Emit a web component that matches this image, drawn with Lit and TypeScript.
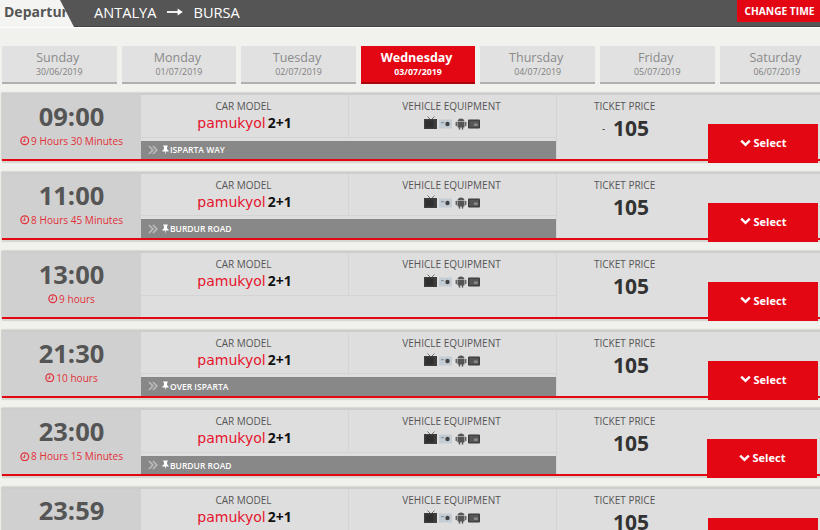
import { LitElement, html, css, svg } from "lit";
import { customElement } from "lit/decorators.js";

const days = [
  ["Sunday", "30/06/2019"], ["Monday", "01/07/2019"], ["Tuesday", "02/07/2019"],
  ["Wednesday", "03/07/2019"], ["Thursday", "04/07/2019"], ["Friday", "05/07/2019"], ["Saturday", "06/07/2019"],
];
const trips = [
  { t: "09:00", d: "9 Hours 30 Minutes", via: "ISPARTA WAY", dash: true },
  { t: "11:00", d: "8 Hours 45 Minutes", via: "BURDUR ROAD" },
  { t: "13:00", d: "9 hours", via: "" },
  { t: "21:30", d: "10 hours", via: "OVER ISPARTA" },
  { t: "23:00", d: "8 Hours 15 Minutes", via: "BURDUR ROAD", shift: true },
  { t: "23:59", d: "", via: "" },
];

const clock = svg`<svg class="clk" viewBox="0 0 12 12"><circle cx="6" cy="6" r="4.9" fill="none" stroke="currentColor" stroke-width="1.6"/><path d="M6 3V6.6H3.4" fill="none" stroke="currentColor" stroke-width="1.3"/></svg>`;
const chev = svg`<svg class="chev" viewBox="0 0 12 8"><path d="M1.3 1.4L6 6.1L10.7 1.4" fill="none" stroke="#fff" stroke-width="2.6"/></svg>`;
const dbl = svg`<svg class="dbl" viewBox="0 0 10 10"><path d="M1 1L4.8 5L1 9M5 1L8.8 5L5 9" fill="none" stroke="#b9b9b9" stroke-width="1.8"/></svg>`;
const pin = svg`<svg class="pin" viewBox="0 0 8 11"><path d="M1.4 0.3H6.6V1.4L5.8 1.9V4.6L7.6 6.3V7.3H4.5L4 10.9L3.5 7.3H0.4V6.3L2.2 4.6V1.9L1.4 1.4Z" fill="#fff"/></svg>`;
const arrow = svg`<svg class="arrow" viewBox="0 0 16 8"><path d="M0 4H13" stroke="#fff" stroke-width="1.8"/><path d="M10.6 0.4L15.8 4L10.6 7.6Z" fill="#fff"/></svg>`;
const icons = svg`<svg class="eq" viewBox="0 0 56 14">
  <path d="M3.5 0.5L6.5 3.5M10.5 0.5L7.5 3.5" stroke="#555" stroke-width="0.8" fill="none"/>
  <rect x="0" y="3" width="13" height="10" fill="#3d3d3d"/><rect x="1.5" y="4.5" width="8" height="7" fill="#2f2f2f"/>
  <rect x="15" y="3.5" width="13" height="9" fill="#c4ccd4"/><circle cx="23.5" cy="8" r="2.2" fill="#444"/><rect x="17" y="6" width="3" height="1.2" fill="#8a949e"/>
  <path d="M33.5 5.2a3.6 3.6 0 0 1 7 0Z" fill="#555"/><rect x="33.5" y="5.8" width="7" height="5.6" rx="0.6" fill="#555"/><rect x="31.6" y="5.8" width="1.3" height="4.4" rx="0.6" fill="#555"/><rect x="41.1" y="5.8" width="1.3" height="4.4" rx="0.6" fill="#555"/><rect x="34.8" y="11" width="1.4" height="2.6" fill="#555"/><rect x="37.8" y="11" width="1.4" height="2.6" fill="#555"/>
  <rect x="44" y="3.5" width="12" height="9" rx="1" fill="#3a3a3a"/><rect x="45.2" y="4.7" width="9.6" height="6.6" fill="#565656"/><rect x="50" y="7.5" width="3.6" height="2.4" fill="#8d8d8d"/>
</svg>`;

@customElement("app-root")
export class AppRoot extends LitElement {
  static styles = css`
    :host { display: block; width: 820px; height: 530px; overflow: hidden; background: #f1f1ed; font-family: "Open Sans", sans-serif; }
    .top { display: flex; align-items: flex-start; height: 27px; background: #555; border-bottom: 1px solid #fff; box-shadow: inset 0 -1px 0 #444; }
    .tab { width: 74px; height: 27px; background: #f4f4f2; clip-path: polygon(0 0, 60px 0, 74px 100%, 0 100%); font-size: 14px; font-weight: 700; color: #555; line-height: 23px; padding-left: 4px; box-sizing: border-box; overflow: hidden; white-space: nowrap; }
    .route { display: flex; align-items: center; height: 23px; margin-left: 20px; color: #fff; font-size: 14.6px; }
    .arrow { width: 16px; height: 8px; margin: 0 11px 0 10px; }
    .change { margin-left: auto; width: 83px; height: 22px; box-sizing: border-box; padding-left: 2px; background: #e30613; color: #fff; font-size: 10.2px; font-weight: 700; line-height: 22px; text-align: center; white-space: nowrap; }
    .days { display: flex; gap: 5px; padding: 18px 0 0 2px; width: 840px; }
    .day { flex: none; width: 114.6px; height: 36px; background: #e1e1e1; border-bottom: 2px solid #b0b0b0; color: #8a8a8a; text-align: center; font-size: 12.5px; line-height: 17px; }
    .day small { display: block; font-size: 8.8px; line-height: 10px; margin-top: 1px; color: #7f7f7f; }
    .day span { display: block; padding: 3px 3px 0 0; }
    .day.on { background: #e30613; border-bottom-color: #a8050f; color: #fff; font-weight: 700; }
    .day.on small { color: #fff; }
    .list { display: flex; flex-direction: column; gap: 10.8px; padding: 9.2px 0 0 2px; }
    .card { position: relative; flex: none; display: flex; height: 68px; width: 818px; box-sizing: border-box; background: #dedede; border-top: 2px solid #cdcdcd; border-bottom: 2px solid #e30613; box-shadow: -1px 0 1px #d4d4ce, 0 -1px 1px #dcdcd6, 0 2px 1px #d8d8d2; }
    .time { flex: none; width: 139px; background: #d0d0d0; text-align: center; color: #555; }
    .time b { display: block; font-size: 25.5px; line-height: 34px; margin-top: 4px; }
    .dur { display: flex; justify-content: center; align-items: center; gap: 1.5px; color: #e2303a; font-size: 10.1px; line-height: 14px; margin-top: 1px; }
    .clk { width: 9.5px; height: 9.5px; }
    .mid { flex: none; width: 415px; display: flex; flex-direction: column; }
    .cols { display: flex; height: 43px; border-bottom: 1px solid #d4d4d4; box-sizing: border-box; }
    .col { flex: 1; text-align: center; font-size: 10px; line-height: 14px; color: #555; padding: 4px 2px 0 0; }
    .col + .col { border-left: 1px solid #d4d4d4; }
    .logo { display: flex; justify-content: center; align-items: baseline; color: #e6142d; font-family: "DejaVu Sans", sans-serif; font-size: 14px; line-height: 17px; margin: 1px 0 0 2px; }
    .logo b { color: #111; font-family: "Open Sans", sans-serif; font-size: 14px; margin-left: 2px; }
    .eq { display: block; width: 56px; height: 14px; margin: 3px auto 0; }
    .via { display: flex; align-items: center; height: 19px; margin-top: 3px; background: #888; color: #fff; font-size: 8.5px; font-weight: 600; padding-left: 7px; }
    .dbl { width: 10px; height: 10px; margin-right: 4px; }
    .pin { width: 7px; height: 10px; margin-right: 1px; }
    .price { flex: none; width: 264px; box-sizing: border-box; border-left: 1px solid #d4d4d4; color: #555; font-size: 10px; line-height: 14px; padding: 4px 0 0 37px; }
    .amt { display: flex; align-items: center; font-size: 21px; font-weight: 700; color: #333; line-height: 28px; margin-top: 1px; position: relative; padding-left: 19px; }
    .dash { position: absolute; left: 8px; font-size: 10px; font-weight: 400; }
    .sel { position: absolute; left: 706px; top: 29px; width: 110px; height: 39px; display: flex; align-items: center; justify-content: center; gap: 3px; background: #e30613; color: #fff; font-size: 11px; font-weight: 700; padding-bottom: 2px; box-sizing: border-box; }
    .sel.s { left: 705px; }
    .chev { width: 11px; height: 8px; }
  `;
  render() {
    return html`
      <div class="top">
        <div class="tab">Departure</div>
        <div class="route">ANTALYA ${arrow} BURSA</div>
        <div class="change">CHANGE TIME</div>
      </div>
      <div class="days">
        ${days.map((d, i) => html`<div class="day ${i === 3 ? "on" : ""}"><span>${d[0]}</span><small>${d[1]}</small></div>`)}
      </div>
      <div class="list">
        ${trips.map((r) => html`
          <div class="card">
            <div class="time"><b>${r.t}</b>${r.d ? html`<div class="dur">${clock}${r.d}</div>` : ""}</div>
            <div class="mid">
              <div class="cols">
                <div class="col">CAR MODEL<div class="logo">pamukyol<b>2+1</b></div></div>
                <div class="col">VEHICLE EQUIPMENT${icons}</div>
              </div>
              ${r.via ? html`<div class="via">${dbl}${pin}${r.via}</div>` : ""}
            </div>
            <div class="price">TICKET PRICE<div class="amt">${r.dash ? html`<span class="dash">-</span>` : ""}105</div></div>
            <div class="sel ${r.shift ? "s" : ""}">${chev}Select</div>
          </div>`)}
      </div>
    `;
  }
}
